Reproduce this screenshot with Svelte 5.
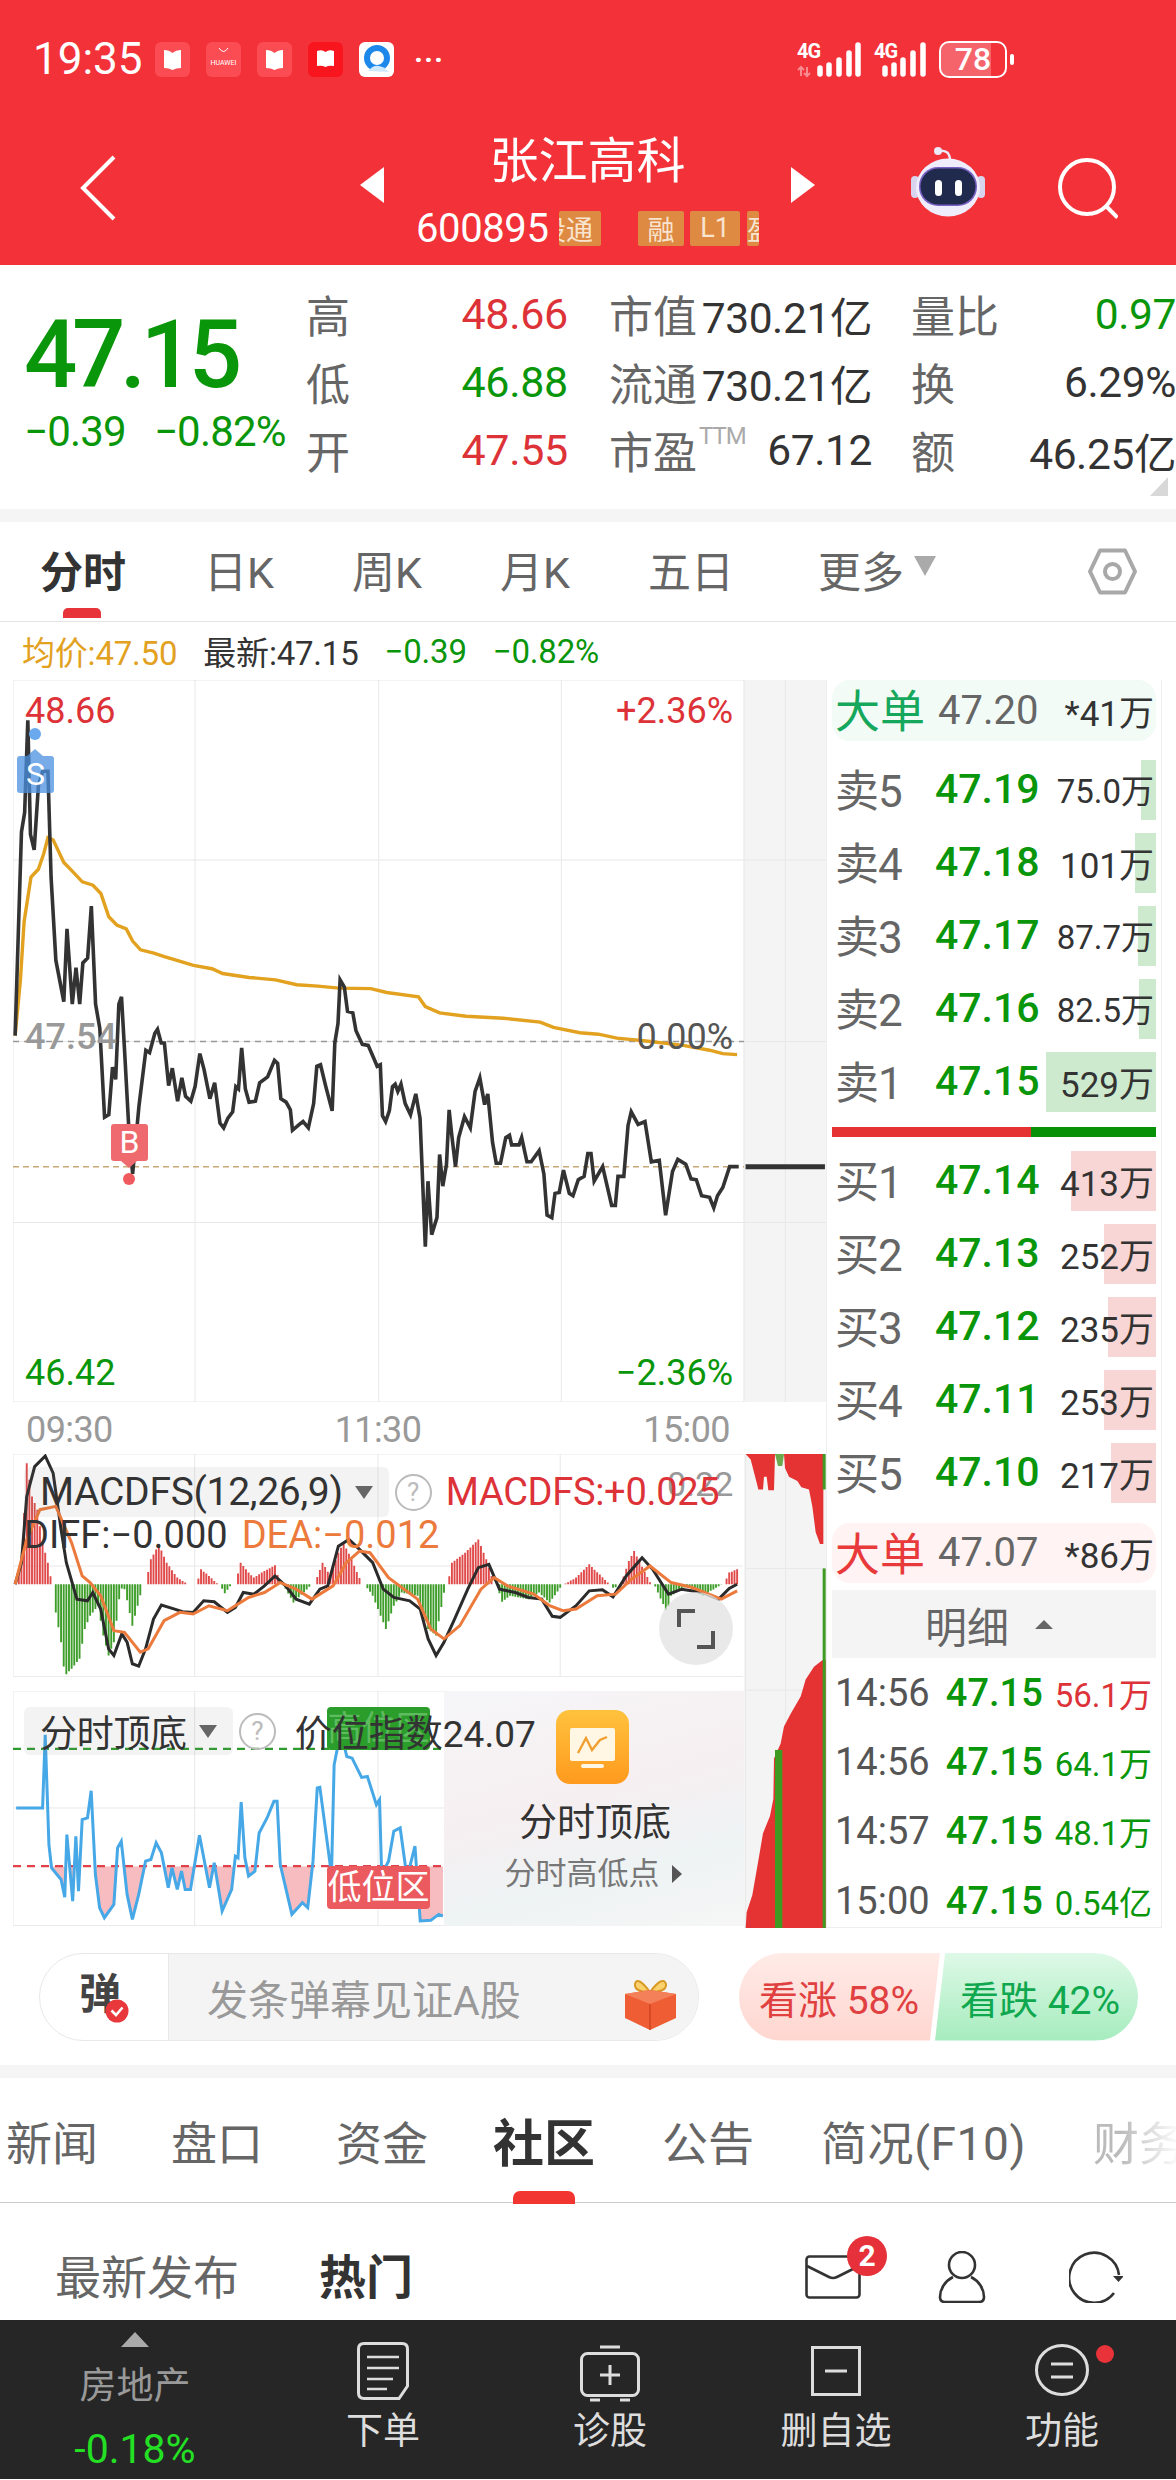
<script>
  const pricePts = "28,755 40,335 46,295 52,105 57,340 64,372 72,240 80,210 90,210 96,430 105,600 120,685 126,535 136,690 143,615 150,690 156,605 165,595 172,488 180,690 188,740 197,923 205,918 212,820 218,845 224,690 229,675 235,790 243,950 250,1040 262,900 275,785 282,790 292,750 297,742 304,770 310,770 318,858 325,822 335,890 343,842 350,880 360,890 368,860 377,792 385,825 396,885 405,852 415,935 422,945 430,925 439,912 445,860 450,865 456,780 463,865 470,892 482,890 490,852 505,840 518,806 524,812 530,885 540,892 548,908 552,950 565,938 572,932 582,945 592,895 598,818 605,815 615,860 627,910 632,770 638,730 642,640 650,655 656,705 666,708 672,745 684,773 695,775 705,800 712,818 718,815 722,920 728,932 735,910 741,860 746,855 751,870 757,855 765,895 775,918 785,875 793,925 803,1190 808,1055 815,1165 825,1130 830,1000 836,1065 843,1020 848,908 853,960 860,1025 866,965 877,922 888,945 897,870 906,842 915,897 921,875 930,975 937,1018 945,1018 955,965 962,960 966,980 980,980 985,965 995,1015 1003,1015 1018,992 1027,1040 1033,1125 1042,1130 1048,1080 1056,1078 1064,1032 1075,1080 1082,1085 1092,1052 1103,1045 1110,998 1116,998 1122,1055 1138,1025 1155,1105 1162,1105 1167,1045 1178,1045 1186,940 1192,912 1205,938 1218,932 1230,1015 1245,1012 1257,1125 1270,1035 1280,1010 1295,1020 1305,1050 1315,1052 1325,1085 1340,1088 1348,1110 1355,1085 1365,1068 1378,1025 1395,1025";
  const avgPts = "28,755 38,640 45,520 58,428 72,412 82,380 90,347 100,352 120,398 135,415 155,438 175,445 190,462 205,510 220,527 238,535 250,560 265,578 290,585 310,592 340,602 365,610 400,617 420,627 470,635 520,640 560,650 600,653 640,657 700,658 730,666 790,675 803,695 830,708 880,715 950,719 1020,727 1045,738 1095,749 1130,752 1165,760 1220,766 1290,775 1340,785 1365,792 1392,794";

  const diffPts = "28,465 40,400 50,200 65,110 85,78 100,130 115,300 125,400 145,510 165,515 175,490 190,540 205,660 215,680 230,615 240,640 250,705 262,712 275,660 290,570 305,528 330,540 345,548 365,550 385,515 405,518 430,550 445,535 460,490 480,495 500,470 520,440 540,470 560,510 585,525 605,480 620,470 640,350 660,330 680,360 705,400 725,480 745,505 775,515 795,540 810,630 825,680 840,640 860,570 885,480 905,415 925,405 945,480 975,490 1000,505 1025,510 1045,562 1060,565 1090,530 1115,485 1140,482 1160,503 1185,440 1215,385 1235,420 1265,495 1290,480 1330,490 1360,510 1380,478 1395,465";
  const deaPts = "28,465 50,330 75,240 105,230 135,340 155,440 170,460 190,500 215,605 235,610 265,670 280,660 310,575 340,550 365,555 395,530 430,545 470,505 500,490 530,460 560,480 590,510 630,470 655,400 680,365 700,370 735,445 790,510 815,600 840,630 870,590 910,480 935,445 960,470 1010,495 1040,530 1065,545 1090,540 1130,500 1165,495 1195,450 1230,410 1270,460 1310,475 1365,510 1395,485";

  // outline of the macd histogram, baseline is y=465
  const histEnv = [[30,465],[40,400],[50,100],[60,200],[70,240],[80,340],[90,400],[98,465],[100,465],[105,550],[115,640],[122,742],[135,720],[150,690],[160,600],[170,560],[185,530],[195,620],[205,680],[215,640],[225,510],[232,465],[237,490],[250,590],[260,530],[270,465],[275,465],[285,390],[300,345],[315,400],[335,445],[355,465],[372,465],[380,420],[395,440],[412,465],[415,465],[425,492],[438,465],[445,465],[455,400],[470,430],[480,445],[500,425],[520,408],[530,465],[535,465],[555,520],[590,465],[595,465],[610,400],[625,440],[640,370],[650,340],[665,390],[685,465],[690,465],[705,500],[730,600],[745,530],[760,490],[790,500],[810,600],[825,620],[843,465],[847,465],[855,400],[880,370],[905,330],[920,390],[935,465],[940,465],[950,518],[965,500],[1000,510],[1020,490],[1040,520],[1065,465],[1068,465],[1090,445],[1115,405],[1150,460],[1155,465],[1162,480],[1170,465],[1175,465],[1190,395],[1200,365],[1232,465],[1238,465],[1262,550],[1270,500],[1300,470],[1330,500],[1366,465],[1370,465],[1380,430],[1395,420]];

  function envAt(x) {
    for (let i = 1; i < histEnv.length; i++) {
      const [x0, y0] = histEnv[i - 1];
      const [x1, y1] = histEnv[i];
      if (x <= x1) return y0 + ((y1 - y0) * (x - x0)) / (x1 - x0 || 1);
    }
    return 465;
  }
  let histRed = "";
  let histGreen = "";
  for (let x = 30; x <= 1396; x += 5) {
    const y = Math.round(envAt(x));
    if (y < 465) histRed += `M${x} 465V${y}`;
    else if (y > 465) histGreen += `M${x} 465V${y}`;
  }

  const topPts = "30,1140 80,1140 85,920 92,1250 97,1320 115,1355 122,1408 126,1220 137,1420 143,1225 148,1390 155,1175 165,1170 172,1088 180,1340 188,1440 197,1470 215,1430 222,1260 229,1240 240,1400 250,1475 262,1400 275,1300 285,1295 295,1245 305,1275 318,1380 325,1320 335,1385 343,1330 350,1385 360,1385 377,1222 396,1380 405,1305 420,1450 438,1385 445,1285 450,1290 456,1122 463,1290 470,1345 482,1330 490,1215 505,1170 518,1120 524,1120 530,1310 552,1460 572,1425 582,1440 592,1300 600,1080 605,1078 627,1340 632,1010 642,930 650,945 656,985 666,990 684,1048 695,1045 712,1130 718,1115 722,1340 735,1300 745,1210 757,1200 770,1350 785,1255 795,1480 815,1478 830,1460 838,1465";

  const asks = [
    ["卖5", "47.19", "75.0万", 15],
    ["卖4", "47.18", "101万", 21],
    ["卖3", "47.17", "87.7万", 18],
    ["卖2", "47.16", "82.5万", 17],
    ["卖1", "47.15", "529万", 110],
  ];
  const bids = [
    ["买1", "47.14", "413万", 85],
    ["买2", "47.13", "252万", 52],
    ["买3", "47.12", "235万", 48],
    ["买4", "47.11", "253万", 52],
    ["买5", "47.10", "217万", 45],
  ];
  const trades = [
    ["14:56", "47.15", "56.1万", "red"],
    ["14:56", "47.15", "64.1万", "green"],
    ["14:57", "47.15", "48.1万", "green"],
    ["15:00", "47.15", "0.54亿", "green"],
  ];
  const quoteRows = [
    { l: "高", v: "48.66", c: "red", m: "市值", mv: "730.21亿", r: "量比", rv: "0.97", rc: "green" },
    { l: "低", v: "46.88", c: "green", m: "流通", mv: "730.21亿", r: "换", rv: "6.29%", rc: "" },
    { l: "开", v: "47.55", c: "red", m: "市盈", ttm: true, mv: "67.12", r: "额", rv: "46.25亿", rc: "" },
  ];
</script>

<div class="page">
  <header class="head">
    <div class="status">
      <span class="clock">19:35</span>
      <div class="notes">
        <svg width="35" height="35" viewBox="0 0 35 35"><rect width="35" height="35" rx="6" fill="#fb4c54"/><path d="M9 8 Q14 8 17.5 11 Q21 8 26 8 V26 Q21 26 17.5 28 Q14 26 9 26Z" fill="#fff"/></svg>
        <svg width="35" height="35" viewBox="0 0 35 35"><rect width="35" height="35" rx="6" fill="#fb4c54"/><path d="M13 6 Q17.5 13 22 6" fill="none" stroke="#fff" stroke-width="1"/><text x="17.5" y="23" font-size="7" fill="#fff" text-anchor="middle" font-family="Roboto">HUAWEI</text></svg>
        <svg width="35" height="35" viewBox="0 0 35 35"><rect width="35" height="35" rx="6" fill="#fb4c54"/><path d="M9 8 Q14 8 17.5 11 Q21 8 26 8 V26 Q21 26 17.5 28 Q14 26 9 26Z" fill="#fff"/></svg>
        <svg width="35" height="35" viewBox="0 0 35 35"><rect width="35" height="35" rx="6" fill="#f9151e"/><path d="M9 9 Q14 7 17.5 10 Q21 7 26 9 V24 Q21 23 17.5 25 Q14 23 9 24Z" fill="#fff"/></svg>
        <svg width="35" height="35" viewBox="0 0 35 35"><rect width="35" height="35" rx="6" fill="#fff"/><circle cx="18" cy="16" r="10" fill="none" stroke="#1e88ea" stroke-width="6"/><path d="M9 29 Q18 18 30 30Z" fill="#cfeaff"/></svg>
        <span class="more-dots">···</span>
      </div>
      <div class="sys">
        <svg width="68" height="37" viewBox="0 0 68 37"><text x="0" y="17" font-size="20" font-weight="700" fill="#fff" font-family="Roboto" letter-spacing="-1">4G</text><path d="M4 35V26M1 29L4 26L7 29M10 26V35M7 32L10 35L13 32" stroke="#f98a90" stroke-width="2" fill="none"/><g stroke="#fff" stroke-width="5.5" stroke-linecap="round"><path d="M23 33V27M32 33V24M42 33V19M52 33V12M61 33V4"/></g></svg>
        <svg width="55" height="37" viewBox="0 0 55 37"><text x="0" y="17" font-size="20" font-weight="700" fill="#fff" font-family="Roboto" letter-spacing="-1">4G</text><g stroke="#fff" stroke-width="5.5" stroke-linecap="round"><path d="M11 33V27M20 33V24M29 33V19M39 33V12M49 33V4"/></g></svg>
        <div class="battery"><div class="level"></div><span>78</span></div>
        <i class="nub"></i>
      </div>
    </div>
    <div class="nav">
      <svg class="back" width="36" height="66" viewBox="0 0 36 66"><path d="M34 2 L3 33 L34 64" fill="none" stroke="#fff" stroke-width="4"/></svg>
      <i class="arrow left"></i>
      <div class="stock">
        <div class="name">张江高科</div>
        <div class="code">
          <span class="num">600895</span>
          <span class="tag first"><b>股通</b></span>
          <span class="tag rong">融</span>
          <span class="tag l1">L1</span>
          <span class="tag cut">盈</span>
        </div>
      </div>
      <i class="arrow right"></i>
      <svg class="robot" width="75" height="70" viewBox="0 0 75 70">
        <path d="M27 4 Q38 2 39 12" fill="none" stroke="#ece9f8" stroke-width="2.5"/>
        <circle cx="27" cy="4" r="4" fill="#ece9f8"/>
        <rect x="0" y="29" width="8" height="22" rx="4" fill="#d8d4ee"/>
        <rect x="66" y="29" width="8" height="22" rx="4" fill="#d8d4ee"/>
        <ellipse cx="37" cy="40.500" rx="32" ry="29" fill="#efedfb"/>
        <rect x="8" y="20" width="58" height="39" rx="19" fill="#7a62c4"/>
        <rect x="9.500" y="21.500" width="55" height="36" rx="18" fill="#1f2a4d"/>
        <rect x="24" y="33" width="7" height="16" rx="3.500" fill="#fff"/>
        <rect x="44" y="33" width="7" height="16" rx="3.500" fill="#fff"/>
      </svg>
      <svg class="search" width="60" height="62" viewBox="0 0 60 62"><circle cx="29" cy="30" r="27" fill="none" stroke="#fff" stroke-width="4"/><path d="M49 50 L59.500 60.500" stroke="#fff" stroke-width="4"/></svg>
    </div>
  </header>

  <section class="quote">
    <div class="last">
      <div class="big">47.15</div>
      <div class="delta"><span>−0.39</span><span>−0.82%</span></div>
    </div>
    <div class="stats">
      {#each quoteRows as q}
        <div class="cell"><span class="lab">{q.l}</span><span class="val {q.c}">{q.v}</span></div>
        <span></span>
        <div class="cell"><span class="lab">{q.m}{#if q.ttm}<small>TTM</small>{/if}</span><span class="val mono dark">{q.mv}</span></div>
        <span></span>
        <div class="cell"><span class="lab">{q.r}</span><span class="val mono {q.rc || 'dark'}">{q.rv}</span></div>
      {/each}
    </div>
    <i class="corner"></i>
  </section>

  <div class="band"></div>

  <nav class="periods">
    <span class="on">分时</span>
    <span>日K</span>
    <span>周K</span>
    <span>月K</span>
    <span>五日</span>
    <span class="more">更多<i></i></span>
    <svg class="hex" width="49" height="47" viewBox="0 0 49 47"><path d="M12 2.500 H37 L47 23.500 L37 44.500 H12 L2 23.500Z" fill="none" stroke="#a8a8a8" stroke-width="4" stroke-linejoin="round"/><circle cx="24.500" cy="23.500" r="7.500" fill="none" stroke="#a8a8a8" stroke-width="4"/></svg>
  </nav>

  <div class="legend">
    <span class="avg">均价:47.50</span>
    <span class="dark">最新:47.15</span>
    <span class="green">−0.39</span>
    <span class="green">−0.82%</span>
  </div>

  <div class="main">
    <div class="charts">
      <div class="pricebox">
        <svg class="fill" viewBox="24 22 1536 1488" preserveAspectRatio="none">
          <rect x="1405" y="22" width="155" height="1488" fill="#f4f4f4"/>
          <path vector-effect="non-scaling-stroke" d="M24 22V1510M368 22V1510M715 22V1510M1060 22V1510M1405 22V1510M1483 22V1510M24 393H1560M24 767H1560M24 1140H1560M24 22H1405M24 1510H1405" fill="none" stroke="#e8e8e8"/>
          <path vector-effect="non-scaling-stroke" d="M24 767H1405" stroke="#999" stroke-width="1.5" stroke-dasharray="6 5" fill="none"/>
          <path vector-effect="non-scaling-stroke" d="M24 1025H1405" stroke="#c9a878" stroke-width="1.5" stroke-dasharray="6 4" fill="none"/>
          <polyline vector-effect="non-scaling-stroke" points={avgPts} fill="none" stroke="#e2a11f" stroke-width="3.4"/>
          <polyline vector-effect="non-scaling-stroke" points={pricePts} fill="none" stroke="#333" stroke-width="3.6"/>
          <path vector-effect="non-scaling-stroke" d="M1408 1025H1558" stroke="#333" stroke-width="5" fill="none"/>
        </svg>
        <span class="pl hi red">48.66</span>
        <span class="pl mid gray">47.54</span>
        <span class="pl lo green">46.42</span>
        <span class="pr hi red">+2.36%</span>
        <span class="pr mid">0.00%</span>
        <span class="pr lo green">−2.36%</span>
        <i class="dot sd"></i>
        <span class="mark s">S</span>
        <span class="mark b">B</span>
        <i class="dot bd"></i>
      </div>

      <div class="times"><span>09:30</span><span>11:30</span><span>15:00</span></div>

      <div class="lower">
        <div class="subs">
          <div class="macd">
            <svg class="fill" viewBox="24 72 1384 673" preserveAspectRatio="none">
              <path vector-effect="non-scaling-stroke" d="M24 72V745M368 72V745M715 72V745M1060 72V745M24 72H1406M24 410H1406M24 744H1406" fill="none" stroke="#e8e8e8"/>
              <path vector-effect="non-scaling-stroke" d={histRed} stroke="#e04a4a" stroke-width="1.9" fill="none"/>
              <path vector-effect="non-scaling-stroke" d={histGreen} stroke="#3f9e2b" stroke-width="1.9" fill="none"/>
              <polyline vector-effect="non-scaling-stroke" points={diffPts} fill="none" stroke="#2b2b2b" stroke-width="3"/>
              <polyline vector-effect="non-scaling-stroke" points={deaPts} fill="none" stroke="#ec7a3c" stroke-width="3"/>
            </svg>
            <span class="ghost">0.22</span>
            <div class="line1">
              <span class="pick">MACDFS(12,26,9)<i></i></span>
              <i class="help">?</i>
              <span class="mval">MACDFS:+0.025</span>
            </div>
            <div class="line2"><span class="dark">DIFF:−0.000</span><span class="dea">DEA:−0.012</span></div>
            <div class="expand">
              <svg width="38" height="40" viewBox="0 0 38 40"><path d="M2 18V2H18M36 22V38H20" fill="none" stroke="#555" stroke-width="4"/></svg>
            </div>
          </div>

          <div class="tops">
            <svg class="fill" viewBox="24 788 1384 707" preserveAspectRatio="none">
              <defs><clipPath id="under"><rect x="24" y="1315" width="820" height="180"/></clipPath></defs>
              <path vector-effect="non-scaling-stroke" d="M24 788V1495M368 788V1495M715 788V1495M24 788H840M24 1140H840M24 1494H840" fill="none" stroke="#e8e8e8"/>
              <polygon points="{topPts} 838,1315 30,1315" fill="#f6bcc0" clip-path="url(#under)"/>
              <path vector-effect="non-scaling-stroke" d="M24 962H840" stroke="#2f9a2f" stroke-width="2.4" stroke-dasharray="8 6" fill="none"/>
              <path vector-effect="non-scaling-stroke" d="M24 1315H840" stroke="#e0424a" stroke-width="2.4" stroke-dasharray="8 6" fill="none"/>
              <polyline vector-effect="non-scaling-stroke" points={topPts} fill="none" stroke="#46a8e6" stroke-width="3"/>
            </svg>
            <span class="zone high">高位区</span>
            <span class="zone low">低位区</span>
            <div class="promo">
              <svg width="73" height="74" viewBox="0 0 73 74">
                <defs><linearGradient id="ic" x1="0" y1="0" x2="0" y2="1"><stop offset="0" stop-color="#ffc23d"/><stop offset="1" stop-color="#ff9a1e"/></linearGradient></defs>
                <rect width="73" height="74" rx="14" fill="url(#ic)"/>
                <rect x="14" y="18" width="45" height="33" rx="2" fill="#fff6e4"/>
                <path d="M22 43 L30 28 L36 40 L44 30 L51 27" fill="none" stroke="#f0a030" stroke-width="2.4"/>
                <rect x="25" y="54" width="23" height="4" rx="2" fill="#fff6e4"/>
              </svg>
              <div class="ptitle">分时顶底</div>
              <div class="psub">分时高低点<i></i></div>
            </div>
            <div class="line1">
              <span class="pick">分时顶底<i></i></span>
              <i class="help">?</i>
              <span class="idx">价位指数24.07</span>
            </div>
          </div>
        </div>

        <svg class="flow" viewBox="40 407 246 1110" preserveAspectRatio="none">
          <rect x="40" y="407" width="246" height="1110" fill="#f4f4f4"/>
          <path vector-effect="non-scaling-stroke" d="M165 407V1517M45 407V1517M45 960H285M45 675H285" stroke="#e8e8e8" fill="none"/>
          <polygon points="45,407 60,420 80,480 83,490 97,490 100,460 108,460 113,492 130,492 133,407" fill="#e53232"/>
          <polygon points="160,407 163,440 175,460 200,470 212,485 235,490 245,530 255,590 268,618 278,618 278,407" fill="#e53232"/>
          <polygon points="133,407 160,407 155,435 142,435" fill="#6ba94e"/>
          <rect x="276" y="407" width="9" height="83" fill="#3f9a22"/>
          <polygon points="45,1517 48,1480 65,1440 85,1350 97,1295 118,1255 128,1215 130,1120 150,1085 160,1045 180,1015 210,975 225,935 250,905 275,890 285,890 285,1517" fill="#e53232"/>
          <rect x="133" y="1100" width="22" height="417" fill="#3f9a22"/>
          <rect x="276" y="675" width="9" height="842" fill="#3f9a22"/>
        </svg>
      </div>
    </div>

    <aside class="book">
      <div class="big-order up"><span class="bl">大单</span><span class="bp">47.20</span><span class="bs">*41万</span></div>
      <div class="levels asks">
        {#each asks as a}
          <div class="lvl">
            <i class="bar ask" style="width: {a[3]}px"></i>
            <span class="ll">{a[0]}</span><span class="lp">{a[1]}</span><span class="ls" class:narrow={a[2].includes(".")}>{a[2]}</span>
          </div>
        {/each}
      </div>
      <div class="split"><i></i><b></b></div>
      <div class="levels">
        {#each bids as b}
          <div class="lvl">
            <i class="bar bid" style="width: {b[3]}px"></i>
            <span class="ll">{b[0]}</span><span class="lp">{b[1]}</span><span class="ls">{b[2]}</span>
          </div>
        {/each}
      </div>
      <div class="big-order dn"><span class="bl">大单</span><span class="bp">47.07</span><span class="bs">*86万</span></div>
      <div class="detail">明细<i></i></div>
      <div class="trades">
        {#each trades as t}
          <div class="tr"><span class="tt">{t[0]}</span><span class="tp">{t[1]}</span><span class="ts {t[3]}">{t[2]}</span></div>
        {/each}
      </div>
    </aside>
  </div>

  <div class="danmu">
    <div class="say">
      <div class="dan">弹<svg width="24" height="24" viewBox="0 0 24 24"><circle cx="12" cy="12" r="11.500" fill="#e8383c"/><path d="M6.500 11.500 L11 16 L17.500 8.500" fill="none" stroke="#fff" stroke-width="2.600"/></svg></div>
      <div class="input">
        <span>发条弹幕见证A股</span>
        <svg class="gift" width="51" height="52" viewBox="0 0 51 52">
          <path d="M25 14 Q12 -3 10 6 Q9 14 25 14 Q38 -3 41 6 Q42 14 25 14Z" fill="#f9d26e" stroke="#d99a26" stroke-width="2"/>
          <path d="M0 16 L25 12 L51 16 V40 L25 52 L0 40Z" fill="#ee5d34"/>
          <path d="M0 16 L25 26 L51 16 L25 12Z" fill="#f4805a"/>
          <path d="M25 26 V52" stroke="#cf4421" stroke-width="1.500"/>
        </svg>
      </div>
    </div>
    <div class="vote">
      <div class="bull">看涨 58%</div>
      <div class="bear">看跌 42%</div>
    </div>
  </div>

  <div class="band"></div>

  <nav class="news">
    <span class="wide">新闻</span>
    <span class="wide">盘口</span>
    <span class="tight">资金</span>
    <span class="on">社区</span>
    <span>公告</span>
    <span class="f10">简况(F10)</span>
    <span class="fade">财务</span>
  </nav>

  <div class="community">
    <span class="c-new">最新发布</span>
    <span class="c-hot">热门</span>
    <div class="c-icons">
      <div class="mail">
        <svg width="56" height="44" viewBox="0 0 56 44"><rect x="1.500" y="1.500" width="53" height="41" rx="3" fill="none" stroke="#333" stroke-width="2.600"/><path d="M2 11 L24 22 Q28 24 32 22 L54 11" fill="none" stroke="#333" stroke-width="2.600"/></svg>
        <b>2</b>
      </div>
      <svg width="48" height="52" viewBox="0 0 48 52"><circle cx="24" cy="14" r="13" fill="none" stroke="#333" stroke-width="2.600"/><path d="M15 26 C7 30 2 38 2 46 Q2 51 7 51 H41 Q46 51 46 46 C46 38 41 30 33 26" fill="none" stroke="#333" stroke-width="2.600"/></svg>
      <svg class="reload" width="54" height="52" viewBox="0 0 54 52"><path d="M50 24 A25 25 0 1 0 45 42" fill="none" stroke="#333" stroke-width="2.600"/><path d="M44 25 H55 L49.500 31Z" fill="#333"/></svg>
    </div>
  </div>

  <footer class="dock">
    <div class="sector">
      <i class="up"></i>
      <span class="sname">房地产</span>
      <span class="schg">-0.18%</span>
    </div>
    <div class="act a1">
      <svg width="52" height="58" viewBox="0 0 52 58"><path d="M7 1.500 H45 Q50.500 1.500 50.500 7 V44 L42 56.500 H7 Q1.500 56.500 1.500 51 V7 Q1.500 1.500 7 1.500Z" fill="none" stroke="#ddd" stroke-width="3"/><path d="M10 15H42M10 26H42M10 37H36M10 47H30" stroke="#ddd" stroke-width="2.600"/></svg>
      <span>下单</span>
    </div>
    <div class="act a2">
      <svg width="60" height="58" viewBox="0 0 60 58"><path d="M20 2H40" stroke="#ddd" stroke-width="3"/><rect x="1.500" y="8.500" width="57" height="42" rx="6" fill="none" stroke="#ddd" stroke-width="3"/><path d="M30 20V40M20 30H40M10 55H20M40 55H50" stroke="#ddd" stroke-width="3"/></svg>
      <span>诊股</span>
    </div>
    <div class="act a3">
      <svg width="50" height="50" viewBox="0 0 50 50"><rect x="1.500" y="1.500" width="47" height="47" fill="none" stroke="#ddd" stroke-width="3"/><path d="M14 25H36" stroke="#ddd" stroke-width="3"/></svg>
      <span>删自选</span>
    </div>
    <div class="act a4">
      <svg width="80" height="52" viewBox="0 0 80 52"><ellipse cx="27" cy="26" rx="25.500" ry="24.500" fill="none" stroke="#ddd" stroke-width="3"/><path d="M16 20H38M16 33H38" stroke="#ddd" stroke-width="3"/><circle cx="70" cy="10" r="9" fill="#e8333a"/></svg>
      <span>功能</span>
    </div>
  </footer>
</div>

<style>
  :global(body) { margin: 0; background: #fff; }
  .page {
    width: 1176px;
    height: 2480px;
    overflow: hidden;
    display: flex;
    flex-direction: column;
    font-family: Roboto, "Noto Sans CJK SC", sans-serif;
    color: #333;
    background: #fff;
  }
  i { display: block; font-style: normal; }
  .red { color: #dc3238; }
  .green { color: #0a960a; }
  .dark { color: #333; }
  .gray { color: #999; }

  .head { height: 265px; background: #f23139; color: #fff; flex: none; }
  .status { height: 118px; display: flex; align-items: center; padding-left: 33px; }
  .clock { font-size: 44px; width: 122px; letter-spacing: 0; }
  .notes { display: flex; align-items: center; gap: 16px; width: 642px; }
  .more-dots { font-size: 30px; font-weight: 700; letter-spacing: 1px; margin-left: 4px; }
  .sys { display: flex; align-items: center; gap: 9px; }
  .battery { position: relative; width: 68px; height: 37px; box-sizing: border-box; border: 2.5px solid #fff; border-radius: 10px; margin-left: 1px; overflow: hidden; text-align: center; }
  .battery span { position: relative; font-size: 32px; line-height: 32px; font-weight: 500; }
  .level { position: absolute; left: 0; top: 0; bottom: 0; width: 78%; background: rgba(255, 255, 255, .25); }
  .nub { width: 4px; height: 11px; background: #fff; border-radius: 2px; margin-left: -6px; }

  .nav { height: 147px; display: flex; align-items: center; padding-left: 80px; }
  .back { margin-top: -8px; margin-right: 244px; }
  .arrow { width: 0; height: 0; border-top: 18px solid transparent; border-bottom: 18px solid transparent; margin-top: -14px; }
  .arrow.left { border-right: 24px solid #fff; }
  .arrow.right { border-left: 24px solid #fff; }
  .stock { width: 407px; display: flex; flex-direction: column; align-items: center; height: 147px; }
  .name { font-size: 49px; line-height: 50px; margin-top: 19px; }
  .code { display: flex; align-items: center; margin-top: 23px; height: 36px; }
  .num { font-size: 40px; width: 143px; letter-spacing: -.4px; }
  .tag { background: #de8a42; color: #f8e4d0; height: 35px; display: flex; align-items: center; justify-content: center; font-size: 27px; overflow: hidden; border-radius: 2px; }
  .tag.first { width: 42px; justify-content: flex-end; padding-right: 8px; box-sizing: border-box; margin-right: 37px; }
  .tag.first b { font-weight: 400; white-space: nowrap; }
  .tag.rong { width: 46px; margin-right: 6px; }
  .tag.l1 { width: 50px; margin-right: 7px; }
  .tag.cut { width: 12px; justify-content: flex-start; }
  .robot { margin-left: 96px; margin-top: -20px; }
  .search { margin-left: 72px; margin-top: -7px; }

  .quote { height: 244px; flex: none; display: flex; position: relative; }
  .last { width: 306px; padding-left: 24px; box-sizing: border-box; }
  .big { font-size: 94px; font-weight: 500; color: #0a960a; line-height: 94px; margin-top: 43px; letter-spacing: -5.4px; }
  .delta { display: flex; gap: 28px; font-size: 42px; color: #0a960a; margin-top: 8px; line-height: 44px; letter-spacing: -.8px; white-space: nowrap; }
  .stats { flex: 1; display: grid; grid-template-columns: 262px 41px 263px 39px 265px; grid-auto-rows: 68px; padding-top: 15px; align-items: center; }
  .cell { display: flex; justify-content: space-between; align-items: center; white-space: nowrap; }
  .lab { font-size: 44px; color: #666; display: flex; }
  .lab small { font-size: 24px; line-height: 36px; color: #aaa; margin-left: 2px; letter-spacing: -1px; }
  .val { font-size: 43px; letter-spacing: -.3px; }
  .val.mono { font-size: 42.5px; letter-spacing: -.4px; }
  .corner { position: absolute; right: 8px; bottom: 13px; width: 0; height: 0; border-left: 18px solid transparent; border-bottom: 19px solid #d8d8d8; }
  .band { height: 13px; background: #f5f5f5; flex: none; }

  .periods { height: 100px; flex: none; display: flex; align-items: center; padding: 0 0 5px 40px; box-sizing: border-box; gap: 78px; border-bottom: 1px solid #e4e4e4; position: relative; font-size: 43px; color: #666; }
  .periods .on { font-weight: 700; color: #333; position: relative; }
  .periods .on::after { content: ""; position: absolute; left: 23px; bottom: -18px; width: 38px; height: 10px; background: #e6343a; border-radius: 5px 5px 0 0; }
  .more { display: flex; align-items: center; gap: 10px; margin-left: 6px; }
  .more i { width: 0; height: 0; border-left: 11px solid transparent; border-right: 11px solid transparent; border-top: 20px solid #aaa; margin-top: -6px; }
  .hex { position: absolute; left: 1088px; top: 26px; }

  .legend { height: 58px; flex: none; display: flex; align-items: center; padding-left: 22px; font-size: 33px; gap: 26px; letter-spacing: -.2px; }
  .avg { color: #e2a11f; }

  .main { height: 1248px; flex: none; display: flex; padding-left: 13px; }
  .charts { width: 813px; flex: none; }
  .pricebox { position: relative; height: 722px; }
  .fill { position: absolute; inset: 0; width: 100%; height: 100%; display: block; }
  .pl, .pr { position: absolute; font-size: 36px; line-height: 40px; }
  .pl { left: 12px; }
  .pr { left: 0; width: 720px; text-align: right; }
  .hi { top: 11px; }
  .mid { top: 337px; }
  .lo { top: 673px; }
  .pl.mid { font-weight: 500; }
  .pr.mid { color: #555; }
  .mark { position: absolute; width: 37px; height: 37px; border-radius: 3px; color: #fff; font-size: 32px; line-height: 37px; text-align: center; }
  .mark.s { left: 4px; top: 76px; background: rgba(74, 144, 226, .75); }
  .mark.s::before { content: ""; position: absolute; left: 10px; top: -7px; border-left: 8px solid transparent; border-right: 8px solid transparent; border-bottom: 7px solid rgba(74, 144, 226, .75); }
  .mark.b { left: 98px; top: 444px; background: #ee6a6e; }
  .mark.b::after { content: ""; position: absolute; left: 10px; bottom: -7px; border-left: 8px solid transparent; border-right: 8px solid transparent; border-top: 7px solid #ee6a6e; }
  .dot { position: absolute; width: 12px; height: 12px; border-radius: 50%; }
  .dot.sd { left: 16px; top: 48px; background: #6aa9ee; }
  .dot.bd { left: 110px; top: 493px; background: #ef5a5e; }

  .times { height: 52px; display: flex; justify-content: space-between; align-items: center; padding: 4px 96px 0 13px; box-sizing: border-box; font-size: 36px; line-height: 36px; color: #999; letter-spacing: -.6px; }

  .lower { display: flex; height: 474px; }
  .subs { width: 731px; flex: none; }
  .flow { width: 82px; height: 474px; display: block; flex: none; }
  .macd { position: relative; height: 223px; margin-bottom: 14px; }
  .tops { position: relative; height: 235px; overflow: hidden; }
  .line1 { position: absolute; left: 11px; top: 13px; display: flex; align-items: center; white-space: nowrap; }
  .pick { display: flex; align-items: center; background: rgba(120, 120, 120, .09); border-radius: 6px; height: 50px; padding: 0 16px; font-size: 39px; letter-spacing: -.3px; color: #333; }
  .pick i { width: 0; height: 0; margin-left: 12px; border-left: 9px solid transparent; border-right: 9px solid transparent; border-top: 13px solid #666; }
  .help { width: 33px; height: 33px; border: 2.5px solid #bbb; border-radius: 50%; color: #bbb; font-size: 26px; line-height: 33px; text-align: center; margin-left: 6px; }
  .mval { color: #dc3238; font-size: 38px; margin-left: 14px; letter-spacing: -.3px; }
  .ghost { position: absolute; left: 654px; top: 10px; font-size: 34px; color: #999; }
  .line2 { position: absolute; left: 11px; top: 58px; display: flex; gap: 14px; font-size: 38px; line-height: 46px; }
  .dea { color: #ec7a3c; }
  .expand { position: absolute; left: 646px; top: 138px; width: 74px; height: 73px; border-radius: 50%; background: rgba(225, 225, 225, .75); display: flex; align-items: center; justify-content: center; }
  .tops .pick { font-size: 37px; height: 48px; }
  .idx { font-size: 37px; margin-left: 19px; color: #333; position: relative; }
  .zone { position: absolute; left: 314px; width: 103px; height: 43px; border-radius: 4px; color: #fff; font-size: 34px; line-height: 43px; text-align: center; }
  .zone.high { top: 16px; background: #2a9d2a; color: #5fbb5f; }
  .zone.low { top: 175px; background: #ea5a5e; }
  .promo { position: absolute; left: 431px; top: 0; width: 302px; height: 235px; display: flex; flex-direction: column; align-items: center; background: linear-gradient(165deg, #f6f6f8, #f6eff1 45%, #eef3f4 72%, #f6f6f6); }
  .promo svg { margin-top: 19px; margin-right: 6px; }
  .ptitle { font-size: 38px; line-height: 44px; margin-top: 16px; color: #333; }
  .psub { display: flex; align-items: center; gap: 12px; font-size: 31px; line-height: 40px; margin-top: 10px; color: #777; margin-right: 4px; }
  .psub i { width: 0; height: 0; border-top: 9px solid transparent; border-bottom: 9px solid transparent; border-left: 10px solid #555; }

  .book { width: 336px; flex: none; box-sizing: border-box; height: 1248px; padding: 0 5px; border-left: 1px solid #eee; border-right: 1px solid #eee; border-bottom: 1px solid #eee; }
  .big-order { height: 61px; border-radius: 18px; display: flex; align-items: center; padding: 0 2px 1px 3px; box-sizing: border-box; }
  .big-order.up { background: #f2fbf6; margin-bottom: 19px; }
  .big-order.dn { background: #fff4f3; margin-top: 20px; height: 60px; }
  .bl { font-size: 45px; width: 103px; margin-top: -3px; }
  .up .bl { color: #15a85c; }
  .dn .bl { color: #e83a3a; }
  .bp { font-size: 40px; color: #666; width: 112px; }
  .bs { font-size: 35px; flex: 1; text-align: right; }
  .levels { display: flex; flex-direction: column; gap: 13px; }
  .lvl { position: relative; height: 60px; display: flex; align-items: center; padding: 0 2px 2px 3px; box-sizing: border-box; }
  .bar { position: absolute; right: 0; top: 0; bottom: 0; }
  .bar.ask { background: #cdeacf; }
  .bar.bid { background: #f8d6d6; }
  .ll { position: relative; width: 100px; font-size: 44px; color: #666; letter-spacing: -1px; white-space: nowrap; margin-top: -3px; }
  .lp { position: relative; width: 112px; font-size: 41px; font-weight: 500; color: #0a960a; }
  .ls { position: relative; flex: 1; text-align: right; font-size: 35px; white-space: nowrap; }
  .ls.narrow { font-size: 33px; }
  .split { display: flex; height: 10px; margin: 15px 0 14px; }
  .split i { width: 199px; background: #e53333; }
  .split b { flex: 1; background: #079107; }
  .detail { height: 68px; margin-top: 7px; background: #f4f4f4; display: flex; align-items: center; justify-content: center; gap: 26px; font-size: 42px; color: #666; padding-right: 10px; }
  .detail i { width: 0; height: 0; border-left: 9px solid transparent; border-right: 9px solid transparent; border-bottom: 9px solid #666; }
  .tr { height: 69.3px; display: flex; align-items: center; padding: 0 4px 0 3px; white-space: nowrap; }
  .tt { font-size: 38px; color: #555; width: 112px; }
  .tp { font-size: 38px; font-weight: 500; color: #0a960a; width: 110px; }
  .ts { font-size: 33px; flex: 1; text-align: right; }

  .danmu { height: 137px; flex: none; display: flex; align-items: center; padding-left: 39px; }
  .say { width: 660px; height: 88px; box-sizing: border-box; border: 1px solid #e8e8e8; border-radius: 44px; display: flex; overflow: hidden; }
  .dan { width: 129px; flex: none; border-right: 1px solid #e8e8e8; position: relative; font-size: 42px; font-weight: 700; color: #444; display: flex; justify-content: center; align-items: center; padding-bottom: 12px; box-sizing: border-box; padding-right: 8px; }
  .dan svg { position: absolute; left: 65px; top: 45px; }
  .input { flex: 1; background: #f4f4f4; display: flex; align-items: center; justify-content: space-between; padding: 0 22px 0 38px; font-size: 41px; color: #999; }
  .gift { margin-top: 14px; }
  .vote { display: flex; margin-left: 40px; width: 399px; height: 88px; border-radius: 44px; overflow: hidden; font-size: 39px; position: relative; white-space: nowrap; }
  .bull, .bear { display: flex; align-items: center; height: 100%; box-sizing: border-box; }
  .bull { width: 201px; padding-left: 20px; color: #e0403f; background: linear-gradient(#ffebe7, #ffd6d0); clip-path: polygon(0 0, 100% 0, 95% 100%, 0 100%); }
  .bear { width: 203px; margin-left: -5px; padding-left: 25px; color: #0fa84f; background: linear-gradient(#def9e7, #a6ecbe); clip-path: polygon(5% 0, 100% 0, 100% 100%, 0 100%); }

  .news { height: 125px; flex: none; display: flex; align-items: center; padding-left: 6px; gap: 67px; font-size: 46px; color: #666; white-space: nowrap; border-bottom: 1px solid #ccc; position: relative; box-sizing: border-box; }
  .news .wide { margin-right: 6px; }
  .news .tight { margin-right: -2px; }
  .news .f10 { letter-spacing: .6px; }
  .news .on { font-size: 51px; font-weight: 700; color: #333; position: relative; }
  .news .on::after { content: ""; position: absolute; left: 20px; bottom: -27px; width: 62px; height: 13px; background: #f23530; border-radius: 7px 7px 0 0; }
  .fade { color: #bbb; -webkit-mask-image: linear-gradient(90deg, #000 30%, transparent 95%); mask-image: linear-gradient(90deg, #000 30%, transparent 95%); }

  .community { height: 117px; flex: none; display: flex; align-items: center; padding: 24px 0 0 55px; box-sizing: border-box; }
  .c-new { font-size: 46px; color: #666; width: 264px; }
  .c-hot { font-size: 47px; font-weight: 700; color: #333; }
  .c-icons { margin-left: auto; display: flex; align-items: center; gap: 77px; padding-right: 53px; margin-top: 6px; }
  .reload { margin-left: 6px; }
  .mail { position: relative; display: flex; margin-top: 1px; }
  .mail b { position: absolute; left: 42px; top: -19px; width: 40px; height: 40px; border-radius: 50%; background: #e6303a; color: #fff; font-size: 30px; line-height: 40px; text-align: center; }

  .dock { height: 159px; flex: none; background: #262626; display: flex; position: relative; color: #ddd; }
  .sector { width: 270px; display: flex; flex-direction: column; align-items: center; box-sizing: border-box; padding-top: 12px; }
  .sector .up { width: 0; height: 0; border-left: 14px solid transparent; border-right: 14px solid transparent; border-bottom: 15px solid #aaa; }
  .sname { font-size: 37px; color: #999; line-height: 44px; margin-top: 18px; }
  .schg { font-size: 41px; color: #24e024; line-height: 46px; margin-top: 17px; }
  .act { position: absolute; top: 22px; display: flex; flex-direction: column; align-items: center; font-size: 37px; width: 160px; height: 130px; }
  .act span { position: absolute; top: 67px; line-height: 46px; white-space: nowrap; }
  .a1 { left: 303px; }
  .a2 { left: 530px; top: 25px; }
  .a3 { left: 756px; top: 26px; }
  .a3 span { top: 63px; }
  .a2 span { top: 64px; }
  .a4 { left: 982px; top: 24px; }
  .a4 span { top: 65px; }
  .a4 svg { margin-left: 26px; }
</style>
